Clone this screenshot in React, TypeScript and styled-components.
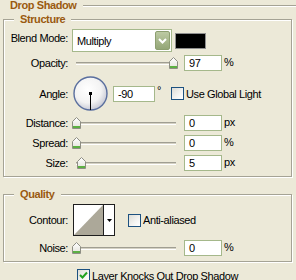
import React from "react";
import styled, { createGlobalStyle } from "styled-components";

const GlobalStyle = createGlobalStyle`
  html, body {
    margin: 0;
    padding: 0;
    background: #ece9d8;
  }
  body {
    font-family: "Liberation Sans", Tahoma, Arial, sans-serif;
    font-size: 11px;
    letter-spacing: -0.4px;
    color: #000;
  }
`;

const Panel = styled.div`
  width: 296px;
  height: 280px;
  overflow: hidden;
  background: #ece9d8;
`;

const TitleRow = styled.div`
  display: flex;
  align-items: flex-start;
  height: 12px;
`;

const Title = styled.div`
  padding: 0 6px 0 10px;
  color: #9a5a10;
  font-weight: bold;
  line-height: 11px;
`;

const Rule = styled.div`
  flex: 1;
  margin-top: 5px;
  border-top: 1px solid #a5a395;
  border-bottom: 1px solid #fff;
`;

const Group = styled.div<{ $top: number }>`
  margin: ${(p) => p.$top}px 0 0 3px;
  width: 289px;
  box-sizing: border-box;
  border: 1px solid #a5a395;
  box-shadow: inset 1px 1px 0 #fff, 1px 1px 0 #fff;
  padding-bottom: 5px;
`;

const Legend = styled.div`
  width: fit-content;
  margin: -7px 0 0 10px;
  padding: 0 6px;
  background: #ece9d8;
  color: #9a5a10;
  font-weight: bold;
  line-height: 12px;
`;

const Row = styled.div<{ $h: number; $mt: number }>`
  display: flex;
  align-items: center;
  height: ${(p) => p.$h}px;
  margin-top: ${(p) => p.$mt}px;
`;

const Label = styled.div<{ $top?: boolean }>`
  width: 64px;
  margin-right: 4px;
  text-align: right;
  white-space: nowrap;
  line-height: 12px;
  align-self: ${(p) => (p.$top ? "flex-start" : "center")};
  padding-top: ${(p) => (p.$top ? 3 : 0)}px;
`;

const Select = styled.div`
  display: flex;
  width: 100px;
  height: 23px;
  box-sizing: border-box;
  border: 1px solid #a5b88b;
  background: #fff;
  padding: 1px;
`;

const SelectText = styled.div`
  flex: 1;
  display: flex;
  align-items: center;
  padding: 1px 0 0 3px;
`;

const SelectButton = styled.div`
  width: 15px;
  box-sizing: border-box;
  border: 1px solid #8d9f70;
  border-radius: 2px;
  background: linear-gradient(#bccaa3, #94a677);
  display: flex;
  align-items: center;
  justify-content: center;
`;

const Swatch = styled.div`
  width: 31px;
  height: 16px;
  margin-left: 3px;
  box-sizing: border-box;
  border: 1px solid #8f8f8f;
  background: #000;
`;

const Slider = styled.div`
  position: relative;
  display: flex;
  align-items: center;
  width: 108px;
  height: 12px;
`;

const Track = styled.div`
  flex: 1;
  margin: 0 4px;
  height: 1px;
  border-top: 1px solid #a09e92;
  border-bottom: 1px solid #fff;
  background: #d4d1c3;
`;

const Thumb = styled.svg`
  position: absolute;
  top: 0;
`;

const NumBox = styled.div<{ $w: number; $ml: number }>`
  width: ${(p) => p.$w}px;
  height: 16px;
  margin-left: ${(p) => p.$ml}px;
  box-sizing: border-box;
  border: 1px solid #a5b88b;
  background: #fff;
  padding-left: 4px;
  line-height: 14px;
`;

const Unit = styled.span`
  margin-left: 2px;
  align-self: flex-start;
  line-height: 12px;
  padding-top: 1px;
`;

const Dial = styled.svg`
  margin-left: 1px;
  display: block;
`;

const Degree = styled.span`
  margin-left: 2px;
  align-self: flex-start;
  padding-top: 8px;
  line-height: 12px;
`;

const CheckLabel = styled.label<{ $ml: number }>`
  display: flex;
  align-items: center;
  gap: 2px;
  margin-left: ${(p) => p.$ml}px;
  white-space: nowrap;
  line-height: 12px;
`;

const Box = styled.span`
  width: 13px;
  height: 13px;
  box-sizing: border-box;
  border: 1px solid #1c5180;
  background: linear-gradient(135deg, #dcdcd6 0%, #f4f4f2 60%, #fff 100%);
  display: flex;
  align-items: center;
  justify-content: center;
`;

const ContourBox = styled.div`
  display: flex;
  margin-left: 1px;
  width: 42px;
  height: 32px;
  box-sizing: border-box;
  border: 1px solid #1e1e1e;
  background: #fff;
`;

const ContourArrow = styled.div`
  flex: 1;
  border-left: 1px solid #1e1e1e;
  display: flex;
  align-items: center;
  justify-content: center;
`;

const BottomRow = styled.div`
  display: flex;
  margin: 7px 0 0 77px;
`;

const ThumbIcon = ({ left }: { left: number }) => (
  <Thumb width="9" height="12" viewBox="0 0 9 12" style={{ left }}>
    <defs>
      <linearGradient id="tg" x1="0" y1="0" x2="0" y2="1">
        <stop offset="0" stopColor="#ffffff" />
        <stop offset="1" stopColor="#e2e2da" />
      </linearGradient>
    </defs>
    <polygon points="4.5,0.5 8.5,4.5 8.5,11.5 0.5,11.5 0.5,4.5" fill="url(#tg)" stroke="#8e8e84" />
    <rect x="1" y="9" width="7" height="2" fill="#5cb043" />
  </Thumb>
);

const SliderRow = ({
  label,
  value,
  unit,
  mt,
}: {
  label: string;
  value: number;
  unit: string;
  mt: number;
}) => (
  <Row $h={16} $mt={mt}>
    <Label>{label}</Label>
    <Slider>
      <Track />
      <ThumbIcon left={value} />
    </Slider>
    <NumBox $w={38} $ml={4}>{value}</NumBox>
    <Unit>{unit}</Unit>
  </Row>
);

const Check = ({ checked }: { checked?: boolean }) => (
  <Box>
    {checked && (
      <svg width="9" height="9" viewBox="0 0 9 9">
        <polyline points="1,4 3.5,6.5 8,1.5" fill="none" stroke="#21a121" strokeWidth="2" />
      </svg>
    )}
  </Box>
);

export default function App() {
  return (
    <Panel>
      <GlobalStyle />
      <TitleRow>
        <Title>Drop Shadow</Title>
        <Rule />
      </TitleRow>

      <Group $top={7}>
        <Legend>Structure</Legend>
        <Row $h={23} $mt={4}>
          <Label $top>Blend Mode:</Label>
          <Select>
            <SelectText>Multiply</SelectText>
            <SelectButton>
              <svg width="9" height="6" viewBox="0 0 9 6">
                <polyline points="1,1 4.5,4.5 8,1" fill="none" stroke="#fff" strokeWidth="2" />
              </svg>
            </SelectButton>
          </Select>
          <Swatch />
        </Row>
        <SliderRow label="Opacity:" value={97} unit="%" mt={3} />
        <Row $h={35} $mt={5}>
          <Label>Angle:</Label>
          <Dial width="35" height="35" viewBox="0 0 35 35">
            <defs>
              <radialGradient id="dg" cx="0.42" cy="0.38" r="0.62">
                <stop offset="0" stopColor="#ffffff" />
                <stop offset="0.65" stopColor="#f3f3f3" />
                <stop offset="1" stopColor="#c9cbd6" />
              </radialGradient>
            </defs>
            <circle cx="17.5" cy="17.5" r="16.5" fill="url(#dg)" stroke="#5a6f9e" strokeWidth="1.4" />
            <line x1="17.5" y1="17.5" x2="17.5" y2="34" stroke="#000" strokeWidth="1" />
            <rect x="16" y="16" width="3" height="3" fill="#000" />
          </Dial>
          <NumBox $w={42} $ml={5}>-90</NumBox>
          <Degree>°</Degree>
          <CheckLabel $ml={10}>
            <Check />
            Use Global Light
          </CheckLabel>
        </Row>
        <SliderRow label="Distance:" value={0} unit="px" mt={4} />
        <SliderRow label="Spread:" value={0} unit="%" mt={4} />
        <SliderRow label="Size:" value={5} unit="px" mt={4} />
      </Group>

      <Group $top={17}>
        <Legend>Quality</Legend>
        <Row $h={32} $mt={4}>
          <Label>Contour:</Label>
          <ContourBox>
            <svg width="29" height="30" viewBox="0 0 29 30">
              <polygon points="0,30 29,0 29,30" fill="#aca899" />
            </svg>
            <ContourArrow>
              <svg width="5" height="3" viewBox="0 0 5 3">
                <polygon points="0,0 5,0 2.5,3" fill="#000" />
              </svg>
            </ContourArrow>
          </ContourBox>
          <CheckLabel $ml={13}>
            <Check />
            Anti-aliased
          </CheckLabel>
        </Row>
        <SliderRow label="Noise:" value={0} unit="%" mt={4} />
      </Group>

      <BottomRow>
        <CheckLabel $ml={0}>
          <Check checked />
          Layer Knocks Out Drop Shadow
        </CheckLabel>
      </BottomRow>
    </Panel>
  );
}
